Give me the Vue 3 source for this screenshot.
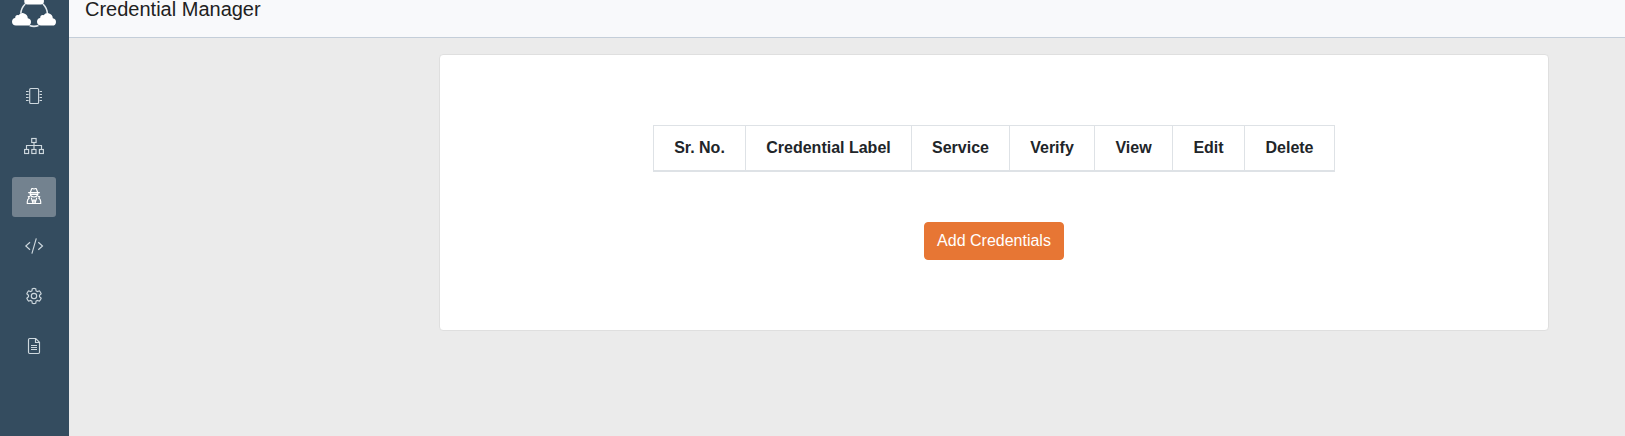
<script setup>
const navItems = ['devices', 'network', 'credentials', 'code', 'settings', 'logs']
const active = 'credentials'
const columns = [
  { label: 'Sr. No.', width: 92 },
  { label: 'Credential Label', width: 166 },
  { label: 'Service', width: 98 },
  { label: 'Verify', width: 85 },
  { label: 'View', width: 78 },
  { label: 'Edit', width: 72 },
  { label: 'Delete', width: 90 },
]
</script>

<template>
  <div class="layout">
    <aside class="sidebar">
      <svg class="logo" width="44" height="28" viewBox="0 0 44 28">
        <rect x="12.3" y="-6" width="19.6" height="10.4" rx="3" fill="#fff" />
        <g fill="none" stroke="#e3e9ed" stroke-width="1.6">
          <path d="M13.2 4Q9.2 8 8.8 13.5M31 4Q35 8 35.4 13.5M17.5 25.6Q22 27.2 26.5 25.6" />
        </g>
        <g fill="#fff">
          <path d="M4 25.6C1.5 25.6 0 24 0 21.7C0 19.4 1.5 18 3.2 17.9C3 15.6 5 14.5 6.8 15.3C8 13.4 9.8 12.8 11.5 13.2C14.2 13.8 15.8 15.6 15.8 18.2C18 18.5 19 19.8 19 21.9C19 24 17.6 25.6 15.5 25.6Z" />
          <path transform="translate(25)" d="M4 25.6C1.5 25.6 0 24 0 21.7C0 19.4 1.5 18 3.2 17.9C3 15.6 5 14.5 6.8 15.3C8 13.4 9.8 12.8 11.5 13.2C14.2 13.8 15.8 15.6 15.8 18.2C18 18.5 19 19.8 19 21.9C19 24 17.6 25.6 15.5 25.6Z" />
        </g>
      </svg>
      <nav class="nav">
        <a v-for="item in navItems" :key="item" class="nav-item" :class="{ active: item === active }">
          <svg class="icon" width="24" height="24" viewBox="0 0 24 24">
            <template v-if="item === 'devices'">
              <rect x="7.7" y="4.5" width="8.9" height="15" rx="1" />
              <path d="M4 7.5H6.6M4 10.5H6.6M4 13.5H6.6M4 16.5H6.6M17.6 7.5H20M17.6 10.5H20M17.6 13.5H20M17.6 16.5H20" />
            </template>
            <template v-else-if="item === 'network'">
              <rect x="9.7" y="4.5" width="4.4" height="4" />
              <rect x="2.6" y="15.5" width="4" height="4" />
              <rect x="9.8" y="15.5" width="4.2" height="4" />
              <rect x="17.4" y="15.5" width="4" height="4" />
              <path d="M12 8.5V15.5M4.5 15.5V11.5H19.5V15.5" />
            </template>
            <template v-else-if="item === 'credentials'">
              <path d="M8.4 8.3L9.5 5.2Q9.9 4.2 10.8 4.6L12 5L13.2 4.6Q14.1 4.2 14.5 5.2L15.6 8.3" />
              <path d="M6.2 8.6H17.8M8.2 9V10.4Q8.8 13 12 13Q15.2 13 15.8 10.4V9M8.4 10.4H15.6" />
              <path d="M8.2 12.4L6.4 12.7L7.1 14.3Q5.4 15.4 5.3 17.5V19.5H18.7V17.5Q18.6 15.4 16.9 14.3L17.6 12.7L15.8 12.4" />
              <path d="M9.2 13.6L11 19.3L11.4 15.5M14.8 13.6L13 19.3L12.6 15.5" />
            </template>
            <template v-else-if="item === 'code'">
              <path d="M8 8.2L3.8 12L8 15.8M16.3 8.2L20.5 12L16.3 15.8M14.3 4.4L9.9 19.7" />
            </template>
            <template v-else-if="item === 'settings'">
              <circle cx="12" cy="12" r="2.7" />
              <path d="M10.3 4.7Q12 4.2 13.7 4.7L14.1 6.9L15.4 7.6L17.4 6.8Q18.7 8.1 19.2 9.8L17.5 11.2V12.8L19.2 14.2Q18.7 15.9 17.4 17.2L15.4 16.4L14.1 17.1L13.7 19.3Q12 19.8 10.3 19.3L9.9 17.1L8.6 16.4L6.6 17.2Q5.3 15.9 4.8 14.2L6.5 12.8V11.2L4.8 9.8Q5.3 8.1 6.6 6.8L8.6 7.6L9.9 6.9Z" />
            </template>
            <template v-else>
              <path d="M7.7 4.5H13.7L17.5 8.3V18.3Q17.5 19.5 16.3 19.5H7.7Q6.5 19.5 6.5 18.3V5.7Q6.5 4.5 7.7 4.5ZM13.5 4.5V8.5H17.5M9 11.5H15M9 13.5H15M9 15.5H15" />
            </template>
          </svg>
        </a>
      </nav>
    </aside>
    <div class="content">
      <header class="header"><h1 class="title">Credential Manager</h1></header>
      <main class="card">
        <table class="table">
          <colgroup>
            <col v-for="c in columns" :key="c.label" :style="{ width: c.width + 'px' }" />
          </colgroup>
          <thead>
            <tr><th v-for="c in columns" :key="c.label">{{ c.label }}</th></tr>
          </thead>
        </table>
        <button class="add">Add Credentials</button>
      </main>
    </div>
  </div>
</template>

<style>
body {
  margin: 0;
  overflow: hidden;
}
</style>

<style scoped>
.layout {
  display: flex;
  height: 436px;
  background: #ebebeb;
  color: #212529;
  font: 16px/24px "Liberation Sans", Arial, sans-serif;
}
.sidebar {
  box-sizing: border-box;
  width: 69px;
  flex: none;
  padding: 0 13px 0 12px;
  background: #344c5f;
}
.logo {
  display: block;
}
.nav {
  display: flex;
  flex-direction: column;
  gap: 10px;
  margin-top: 49px;
}
.nav-item {
  box-sizing: border-box;
  display: flex;
  justify-content: center;
  height: 40px;
  padding-top: 7px;
  border-radius: 3px;
}
.nav-item.active {
  background: #73828f;
}
.icon {
  fill: none;
  stroke: #ced8de;
  stroke-width: 1.15;
}
.active .icon {
  stroke: #fff;
}
.content {
  flex: 1;
  min-width: 0;
}
.header {
  box-sizing: border-box;
  height: 38px;
  padding-left: 16px;
  background: #f8f9fb;
  border-bottom: 1px solid #c4ced9;
}
.title {
  margin: 0;
  font-size: 20px;
  font-weight: 400;
  line-height: 18px;
  color: #212121;
}
.card {
  box-sizing: border-box;
  display: flex;
  flex-direction: column;
  align-items: center;
  width: 1110px;
  height: 277px;
  margin: 16px 0 0 370px;
  padding-top: 70px;
  background: #fff;
  border: 1px solid #dfdfdf;
  border-radius: 4px;
}
.table {
  table-layout: fixed;
  width: 682px;
  border-collapse: collapse;
}
.table th {
  padding: 10px 0;
  border: 1px solid #dee2e6;
  border-bottom-width: 2px;
  white-space: nowrap;
}
.add {
  height: 38px;
  margin-top: 50px;
  padding: 6px 12px;
  border: 1px solid #e77634;
  border-radius: 4px;
  background: #e77634;
  color: #fff;
  font: inherit;
}
</style>
